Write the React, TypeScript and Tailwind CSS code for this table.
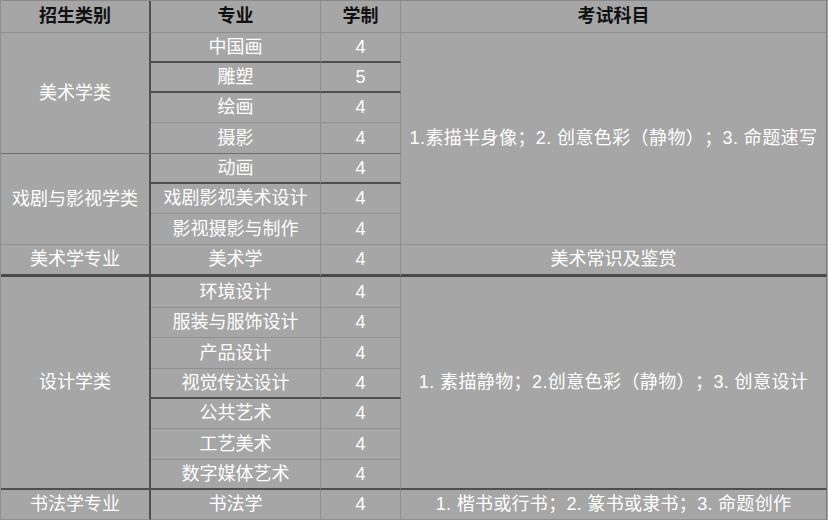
const font = { fontFamily: '"Liberation Sans", "Noto Sans CJK SC", sans-serif' }

// bottom border variants seen in the table
const LIGHT = 'border-b border-b-[#8f8f8f]'
const MID = 'border-b border-b-[#6f6f6f]'
const DARK = 'border-b-2 border-b-[#4f4f4f]'
const THICK = 'border-b-[3px] border-b-[#4a4a4a]'

const rowStart = [
  'row-start-2',
  'row-start-3',
  'row-start-4',
  'row-start-5',
  'row-start-6',
  'row-start-7',
  'row-start-8',
  'row-start-9',
  'row-start-10',
  'row-start-11',
  'row-start-12',
  'row-start-13',
  'row-start-14',
  'row-start-15',
  'row-start-16',
  'row-start-17',
]

const majors: [string, string, string][] = [
  ['中国画', '4', DARK],
  ['雕塑', '5', DARK],
  ['绘画', '4', LIGHT],
  ['摄影', '4', MID],
  ['动画', '4', DARK],
  ['戏剧影视美术设计', '4', LIGHT],
  ['影视摄影与制作', '4', LIGHT],
  ['美术学', '4', THICK],
  ['环境设计', '4', LIGHT],
  ['服装与服饰设计', '4', LIGHT],
  ['产品设计', '4', LIGHT],
  ['视觉传达设计', '4', DARK],
  ['公共艺术', '4', LIGHT],
  ['工艺美术', '4', LIGHT],
  ['数字媒体艺术', '4', DARK],
  ['书法学', '4', LIGHT],
]

function Cell({ className, children }: { className: string; children: React.ReactNode }) {
  return (
    <div className={`flex items-center justify-center whitespace-nowrap ${className}`}>
      {children}
    </div>
  )
}

const C1 = 'col-start-1 border-r-2 border-r-[#4f4f4f]'
const C2 = 'col-start-2 border-r border-r-[#8f8f8f]'
const C3 = 'col-start-3 border-r border-r-[#8f8f8f]'
const C4 = 'col-start-4 border-r border-r-[#7a7a7a] [text-spacing-trim:space-all]'

export default function App() {
  return (
    <div className="h-[520px] w-[828px] bg-[#a6a6a6]" style={font}>
      <div className="grid grid-cols-[150px_170px_80px_426px] grid-rows-[32px_30px_30px_30px_31px_30px_30px_31px_32px_31px_30px_31px_30px_30px_31px_30px_30px] border-l border-t border-l-[#8f8f8f] border-t-[#8a8a8a] text-[18px] text-white">
        {/* header */}
        <Cell className={`${C1} row-start-1 ${LIGHT} font-bold text-[#111]`}>招生类别</Cell>
        <Cell className={`${C2} row-start-1 ${LIGHT} font-bold text-[#111]`}>专业</Cell>
        <Cell className={`${C3} row-start-1 ${LIGHT} font-bold text-[#111]`}>学制</Cell>
        <Cell className={`${C4} row-start-1 ${LIGHT} font-bold text-[#111]`}>考试科目</Cell>

        {/* categories */}
        <Cell className={`${C1} row-start-2 row-span-4 ${MID}`}>美术学类</Cell>
        <Cell className={`${C1} row-start-6 row-span-3 ${LIGHT}`}>戏剧与影视学类</Cell>
        <Cell className={`${C1} row-start-9 ${THICK}`}>美术学专业</Cell>
        <Cell className={`${C1} row-start-10 row-span-7 ${DARK}`}>设计学类</Cell>
        <Cell className={`${C1} row-start-17 ${LIGHT}`}>书法学专业</Cell>

        {/* majors + years */}
        {majors.map(([name, years, border], i) => (
          <div key={name} className="contents">
            <Cell className={`${C2} ${rowStart[i]} ${border}`}>{name}</Cell>
            <Cell className={`${C3} ${rowStart[i]} ${border}`}>{years}</Cell>
          </div>
        ))}

        {/* exam subjects */}
        <Cell className={`${C4} row-start-2 row-span-7 ${LIGHT} tracking-[0.4px]`}>
          1.素描半身像；2. 创意色彩（静物）；3. 命题速写
        </Cell>
        <Cell className={`${C4} row-start-9 ${THICK}`}>美术常识及鉴赏</Cell>
        <Cell className={`${C4} row-start-10 row-span-7 ${DARK} tracking-[0.4px]`}>
          1. 素描静物；2.创意色彩（静物）；3. 创意设计
        </Cell>
        <Cell className={`${C4} row-start-17 ${LIGHT} tracking-[0.3px]`}>
          1. 楷书或行书；2. 篆书或隶书；3. 命题创作
        </Cell>
      </div>
    </div>
  )
}
